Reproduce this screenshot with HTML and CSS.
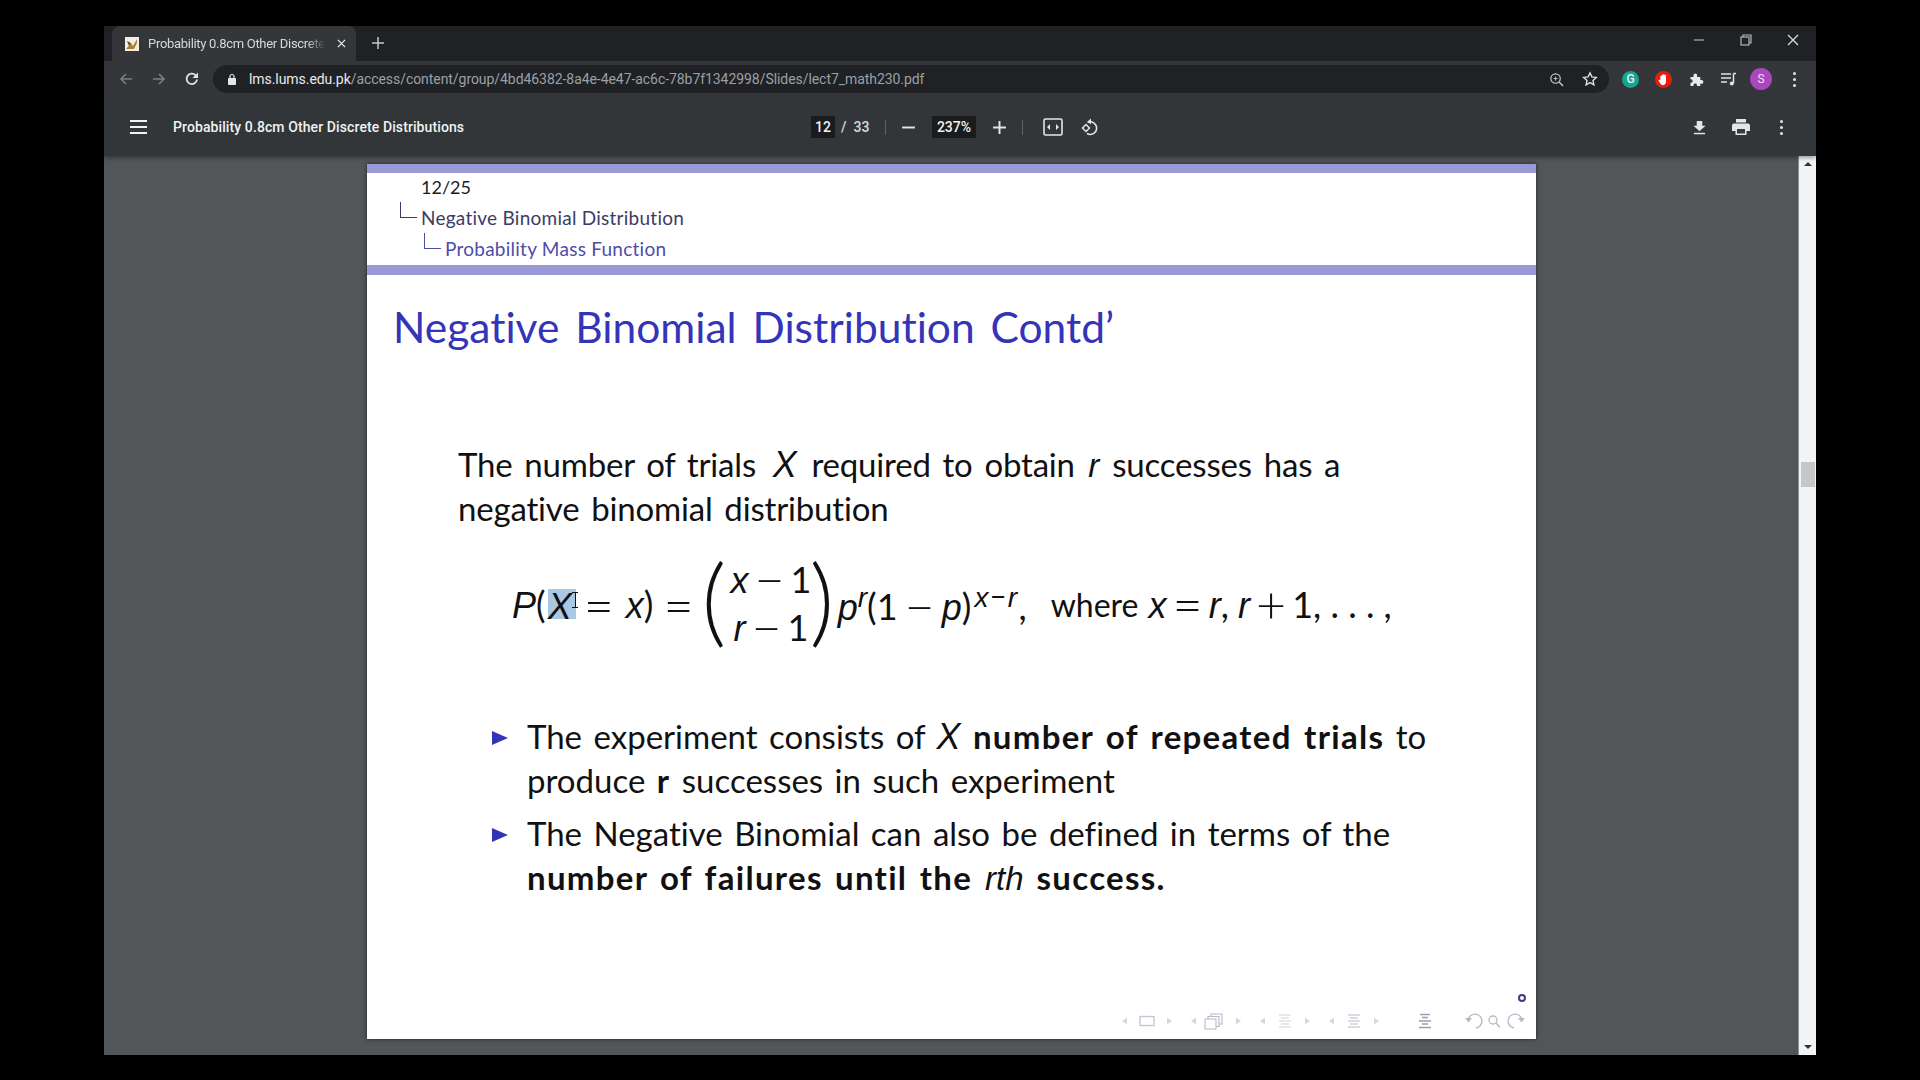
FILE: index.html

```html
<!DOCTYPE html>
<html lang="en">
<head>
  <meta charset="UTF-8">
  <title>Probability 0.8cm Other Discrete Distributions</title>
  <link rel="stylesheet" href="styles.css">
</head>
<body>
  <div class="window">
    <!-- tab strip -->
    <div class="tabstrip">
      <div class="tab">
        <svg class="favicon" viewBox="0 0 14 14"><rect width="14" height="14" fill="#f4efe2"/><path d="M1 12L6 6l2 3 4-7v4l-3 6z" fill="#a8803c"/><path d="M2 4l4 2-2 3z" fill="#5d4a2c"/></svg>
        <span class="tab-title">Probability 0.8cm Other Discrete</span>
        <svg class="tab-close" viewBox="0 0 10 10"><path d="M1 1l8 8M9 1l-8 8" stroke="#e8eaed" stroke-width="1.4"/></svg>
      </div>
      <svg class="new-tab" viewBox="0 0 12 12"><path d="M6 0v12M0 6h12" stroke="#c4c7ca" stroke-width="1.5"/></svg>
      <div class="win-controls">
        <svg viewBox="0 0 12 12"><path d="M1 6h10" stroke="#9a9c9e" stroke-width="1.4"/></svg>
        <svg viewBox="0 0 12 12"><rect x="1" y="3" width="8" height="8" fill="none" stroke="#b5b7b9" stroke-width="1.2"/><path d="M3 3V1h8v8H9" fill="none" stroke="#b5b7b9" stroke-width="1.2"/></svg>
        <svg viewBox="0 0 12 12"><path d="M1 1l10 10M11 1L1 11" stroke="#d8dadc" stroke-width="1.3"/></svg>
      </div>
    </div>
    <!-- address bar -->
    <div class="toolbar">
      <svg class="nav" viewBox="0 0 16 16"><path d="M14 8H3M8 3L3 8l5 5" fill="none" stroke="#7b7e81" stroke-width="1.6"/></svg>
      <svg class="nav" viewBox="0 0 16 16"><path d="M2 8h11M8 3l5 5-5 5" fill="none" stroke="#7b7e81" stroke-width="1.6"/></svg>
      <svg class="nav" viewBox="0 0 16 16"><path d="M13 8.500A5.200 5.200 0 1 1 11.600 4.300" fill="none" stroke="#e3e5e7" stroke-width="1.8"/><path d="M14 1.500V7H8.500z" fill="#e3e5e7"/></svg>
      <div class="omnibox">
        <svg class="lock" viewBox="0 0 10 12"><rect x="1" y="5" width="8" height="7" rx="1" fill="#e3e5e7"/><path d="M3 5V3.500a2 2 0 0 1 4 0V5" fill="none" stroke="#e3e5e7" stroke-width="1.2"/></svg>
        <span class="url"><b>lms.lums.edu.pk</b>/access/content/group/4bd46382-8a4e-4e47-ac6c-78b7f1342998/Slides/lect7_math230.pdf</span>
        <svg class="omni-icon" viewBox="0 0 16 16"><circle cx="7" cy="7" r="5" fill="none" stroke="#c4c7ca" stroke-width="1.300"/><path d="M11 11l4 4" stroke="#c4c7ca" stroke-width="1.500"/><path d="M7 4.800v4.400M4.800 7h4.400" stroke="#c4c7ca"/></svg>
        <svg class="omni-icon star" viewBox="0 0 16 16"><path d="M8 1.800l1.900 4.100 4.400.5-3.300 3 .9 4.400L8 11.600l-3.900 2.200.9-4.400-3.300-3 4.400-.5z" fill="none" stroke="#dcdee0" stroke-width="1.400"/></svg>
      </div>
      <div class="extensions">
        <span class="ext ext-g">G</span>
        <span class="ext ext-hand"><svg viewBox="0 0 16 16"><path d="M4.600 8.500V4.600a.8.8 0 0 1 1.500 0V3.200a.8.8 0 0 1 1.500 0V2.600a.8.8 0 0 1 1.500 0v.8a.8.8 0 0 1 1.500 0v7c0 2-1.200 3.600-3.200 3.600-1.500 0-2.300-.8-3-2L2.800 9.300c-.5-.8.500-1.500 1.100-.9z" fill="#fff"/></svg></span>
        <svg class="ext-svg" viewBox="0 0 16 16"><path d="M1.500 6h3V4.300a1.800 1.800 0 0 1 3.600 0V6h3.200v3h1.200a1.900 1.900 0 0 1 0 3.800h-1.200V15H8v-1a1.800 1.800 0 0 0-3.500 0v1H1.500v-3.200h.8a1.900 1.900 0 0 0 0-3.600h-.8z" fill="#e8eaed"/></svg>
        <svg class="ext-svg ext-queue" viewBox="0 0 16 16"><path d="M0 3h10M0 7h10M0 11h6" stroke="#e0e2e4" stroke-width="1.300"/><path d="M12.500 2.500V12" stroke="#e0e2e4" stroke-width="1.500"/><path d="M12.500 2.500H15" stroke="#e0e2e4" stroke-width="1.500"/><circle cx="10.800" cy="12.500" r="2" fill="#e0e2e4"/></svg>
        <span class="avatar">S</span>
        <span class="dots"><i></i><i></i><i></i></span>
      </div>
    </div>
    <!-- pdf viewer toolbar -->
    <div class="pdfbar">
      <div class="pdf-left">
        <span class="menu"><i></i><i></i><i></i></span>
        <span class="doc-title">Probability 0.8cm Other Discrete Distributions</span>
      </div>
      <div class="pdf-mid">
        <span class="page-box">12</span>
        <span class="page-total">/ &nbsp;33</span>
        <span class="sep"></span>
        <svg class="zoom-btn" viewBox="0 0 14 14"><path d="M1 7h12" stroke="#e3e5e7" stroke-width="1.800"/></svg>
        <span class="zoom-box">237%</span>
        <svg class="zoom-btn" viewBox="0 0 14 14"><path d="M1 7h12M7 1v12" stroke="#e3e5e7" stroke-width="1.800"/></svg>
        <span class="sep"></span>
        <svg class="fit-btn" viewBox="0 0 20 18"><rect x="1" y="1" width="18" height="16" rx="1.500" fill="none" stroke="#e3e5e7" stroke-width="1.600"/><path d="M4 9l3-3v6zM16 9l-3-3v6z" fill="#e3e5e7"/></svg>
        <svg class="rotate-btn" viewBox="0 0 18 18"><path d="M6.500 4.500A6.300 6.300 0 1 1 6 15.500" fill="none" stroke="#e3e5e7" stroke-width="1.500"/><path d="M10 .500v6L6.500 3.500z" fill="#e3e5e7"/><path d="M5 6.500L1.500 10 5 13.500 8.500 10z" fill="none" stroke="#e3e5e7" stroke-width="1.500"/></svg>
      </div>
      <div class="pdf-right">
        <svg viewBox="0 0 14 16"><path d="M4 1h6v5h3.500L7 12 .5 6H4z" fill="#e3e5e7"/><path d="M1 14.500h12" stroke="#e3e5e7" stroke-width="1.600"/></svg>
        <svg viewBox="0 0 18 16"><path d="M4 0h10v3.500H4zM2 4.500h14a2 2 0 0 1 2 2V12h-3.500v4h-11v-4H0V6.500a2 2 0 0 1 2-2z" fill="#e3e5e7"/><rect x="5" y="10" width="8" height="4.500" fill="#3a3c3f"/></svg>
        <span class="dots"><i></i><i></i><i></i></span>
      </div>
    </div>
    <!-- document area -->
    <div class="viewer">
      <div class="page-wrap">
        <div class="slide">
          <div class="slide-head">
            <div class="crumb crumb-num">12/25</div>
            <div class="crumb crumb-one"><span class="elbow"></span>Negative Binomial Distribution</div>
            <div class="crumb crumb-two"><span class="elbow"></span>Probability Mass Function</div>
          </div>
          <h1 class="slide-title">Negative Binomial Distribution Contd’</h1>
          <p class="lead">The number of trials <em class="big">X</em> required to obtain <em>r</em> successes has a negative binomial distribution</p>
          <div class="formula">
            <span class="m"><em>P</em>(</span>
            <span class="sel"><em>X</em></span>
            <span class="op op-first">=</span>
            <span class="m"><em>x</em>)</span>
            <span class="op op-eq">=</span>
            <span class="paren">(</span>
            <span class="binom">
              <span class="binom-row"><em>x</em><span class="op">−</span>1</span>
              <span class="binom-row"><em>r</em><span class="op">−</span>1</span>
            </span>
            <span class="paren">)</span>
            <span class="m m-power"><em>p</em><sup><em>r</em></sup>(1<span class="op">−</span><em>p</em>)<sup class="sup-wide"><em>x</em>−<em>r</em></sup>,</span>
            <span class="m where">where</span>
            <span class="m m-tail"><em>x</em><span class="op">=</span><em>r</em>, <em>r</em><span class="op">+</span>1, . . . ,</span>
            <span class="ibeam"></span>
          </div>
          <ul class="points">
            <li>The experiment consists of <em class="big">X</em> <b>number of repeated trials</b> to produce <b>r</b> successes in such experiment</li>
            <li>The Negative Binomial can also be defined in terms of the <b>number of failures until the</b> <em>rth</em> <b>success.</b></li>
          </ul>
          <div class="slide-foot">
            <span class="foot-dot"></span>
            <div class="beamer-nav">
              <svg class="nav-a" viewBox="0 0 52 14"><path d="M1 7l5-3.500v7zM51 7l-5-3.500v7z" fill="#d8d8e4"/><rect x="19" y="2.500" width="14" height="9" fill="none" stroke="#c4c4d4" stroke-width="1.300"/></svg>
              <svg class="nav-b" viewBox="0 0 52 18"><path d="M1 9l5-3.500v7zM51 9l-5-3.500v7z" fill="#d8d8e4"/><path d="M15 7h11v10H15zM18 7V4.500h11v10h-3M21 4.500V2h11v10h-3" fill="#fff" stroke="#b8b8c8" stroke-width="1.100"/></svg>
              <svg class="nav-a" viewBox="0 0 52 14"><path d="M1 7l5-3.500v7zM51 7l-5-3.500v7z" fill="#d8d8e4"/><path d="M20 1h12M22 4h8M20 7h12M22 10h8M20 13h12" stroke="#d0d0dc" stroke-width="1.200"/></svg>
              <svg class="nav-a" viewBox="0 0 52 14"><path d="M1 7l5-3.500v7zM51 7l-5-3.500v7z" fill="#d8d8e4"/><path d="M20 1h12M22 4h8M20 7h12M22 10h8M20 13h12" stroke="#b8b8c8" stroke-width="1.200"/></svg>
              <svg class="nav-c" viewBox="0 0 14 16"><path d="M2 1.500h10M4 4.500h6M1 8h12M4 11h6M1 14.500h12" stroke="#9c9cb0" stroke-width="1.400"/></svg>
              <svg class="nav-d" viewBox="0 0 60 18"><path d="M3 8a7 7 0 1 1 8 8" fill="none" stroke="#b8b8c8" stroke-width="1.300"/><path d="M0 6h7l-3.500 4.500z" fill="#b8b8c8"/><circle cx="28" cy="8" r="4" fill="none" stroke="#b8b8c8" stroke-width="1.300"/><path d="M31 11l4 4.500" stroke="#b8b8c8" stroke-width="1.400"/><path d="M57 8a7 7 0 1 0-8 8" fill="none" stroke="#b8b8c8" stroke-width="1.300"/><path d="M60 6h-7l3.500 4.500z" fill="#b8b8c8"/></svg>
            </div>
          </div>
        </div>
      </div>
      <div class="scrollbar">
        <span class="arrow-up"></span>
        <span class="thumb"></span>
        <span class="arrow-down"></span>
      </div>
    </div>
  </div>
</body>
</html>
```

FILE: styles.css

```css
body {
  margin: 0;
  background: #000;
  font-family: "Roboto", "Liberation Sans", sans-serif;
  height: 1080px;
  overflow: hidden;
}
.window {
  margin: 26px 0 0 104px;
  width: 1712px;
  height: 1029px;
  display: flex;
  flex-direction: column;
  background: #525659;
}
.tabstrip {
  height: 35px;
  background: #202124;
  display: flex;
  align-items: flex-end;
  flex: none;
}
.tab {
  width: 244px;
  height: 35px;
  margin-left: 8px;
  background: #35363a;
  border-radius: 8px 8px 0 0;
  display: flex;
  align-items: center;
  box-sizing: border-box;
  padding-left: 13px;
}
.favicon {
  width: 14px;
  height: 14px;
}
.tab-title {
  color: #d5d7d9;
  font-size: 13px;
  letter-spacing: -0.3px;
  line-height: 18px;
  margin-left: 9px;
  width: 177px;
  overflow: hidden;
  white-space: nowrap;
  -webkit-mask-image: linear-gradient(to right, #000 90%, transparent);
}
.tab-close {
  width: 9px;
  height: 9px;
  margin-left: 12px;
}
.new-tab {
  width: 12px;
  height: 12px;
  margin: 0 0 12px 16px;
}
.win-controls {
  margin-left: auto;
  display: flex;
  gap: 35px;
  padding: 0 17px 15px 0;
}
.win-controls svg {
  width: 12px;
  height: 12px;
}
.toolbar {
  height: 36px;
  background: #35363a;
  display: flex;
  align-items: center;
  flex: none;
  padding-left: 14px;
}
.nav {
  width: 16px;
  height: 16px;
  margin-right: 17px;
}
.omnibox {
  width: 1396px;
  height: 28px;
  margin-left: -4px;
  background: #202124;
  border-radius: 14px;
  display: flex;
  align-items: center;
  box-sizing: border-box;
  padding-left: 14px;
}
.lock {
  width: 10px;
  height: 12px;
}
.url {
  color: #9aa0a6;
  font-size: 14px;
  letter-spacing: -0.06px;
  margin-left: 12px;
  white-space: nowrap;
  flex: 1;
}
.url b {
  color: #e8eaed;
  font-weight: 400;
}
.omni-icon {
  width: 15px;
  height: 15px;
}
.star {
  margin: 0 11px 0 18px;
  width: 16px;
  height: 16px;
}
.extensions {
  display: flex;
  align-items: center;
  margin-left: 13px;
}
.ext {
  width: 17px;
  height: 17px;
  border-radius: 50%;
  display: flex;
  align-items: center;
  justify-content: center;
  color: #e8f5f2;
  font-size: 12px;
  font-weight: 500;
}
.ext svg {
  width: 15px;
  height: 15px;
}
.ext-g {
  background: #15a68f;
}
.ext-hand {
  background: #ea1c10;
  margin-left: 16px;
}
.ext-svg {
  width: 16px;
  height: 16px;
  margin-left: 17px;
}
.ext-queue {
  margin-left: 16px;
}
.avatar {
  width: 22px;
  height: 22px;
  border-radius: 50%;
  background: #ab47bc;
  color: #f3dcf7;
  font-size: 12px;
  display: flex;
  align-items: center;
  justify-content: center;
  margin-left: 13px;
}
.dots {
  display: flex;
  flex-direction: column;
  gap: 3px;
  margin-left: 21px;
}
.dots i {
  width: 3px;
  height: 3px;
  background: #e3e5e7;
  border-radius: 50%;
}
.pdfbar {
  height: 59px;
  box-sizing: border-box;
  padding-top: 1px;
  background: #323639;
  display: flex;
  align-items: center;
  flex: none;
  position: relative;
  box-shadow: 0 2px 4px rgba(0, 0, 0, 0.35);
  z-index: 1;
}
.pdf-left {
  display: flex;
  align-items: center;
  width: 699px;
  flex: none;
}
.menu {
  display: flex;
  flex-direction: column;
  gap: 4px;
  margin-left: 26px;
}
.menu i {
  width: 17px;
  height: 2px;
  background: #f1f1f1;
}
.doc-title {
  color: #f1f1f1;
  font-size: 14px;
  font-weight: 500;
  letter-spacing: 0.1px;
  margin-left: 26px;
  white-space: nowrap;
}
.pdf-mid {
  display: flex;
  align-items: center;
  color: #f1f1f1;
  font-size: 14px;
  font-weight: 500;
}
.page-box {
  background: #191b1c;
  width: 24px;
  height: 22px;
  line-height: 22px;
  text-align: center;
  margin-left: 8px;
}
.page-total {
  margin-left: 6px;
  color: #d8dadc;
  width: 44px;
}
.sep {
  width: 1px;
  height: 15px;
  background: #5f6265;
}
.zoom-btn {
  width: 15px;
  height: 15px;
  margin: 0 15px;
}
.zoom-box {
  background: #191b1c;
  width: 44px;
  height: 22px;
  line-height: 22px;
  text-align: center;
  margin-left: 1px;
  margin-right: 1px;
}
.fit-btn {
  width: 20px;
  height: 18px;
  margin-left: 20px;
}
.rotate-btn {
  width: 18px;
  height: 18px;
  margin-left: 18px;
}
.pdf-right {
  margin-left: auto;
  display: flex;
  align-items: center;
  padding-right: 33px;
}
.pdf-right svg:first-child {
  width: 13px;
  height: 15px;
}
.pdf-right svg:nth-child(2) {
  width: 18px;
  height: 16px;
  margin-left: 26px;
}
.pdf-right .dots {
  margin-left: 30px;
}
.viewer {
  flex: 1;
  display: flex;
  background: #525659;
  min-height: 0;
}
.page-wrap {
  flex: 1;
  padding: 8px 0 0 263px;
}
.slide {
  width: 1169px;
  height: 875px;
  background: #fff;
  box-shadow: 0 0 4px rgba(0, 0, 0, 0.6);
  display: flex;
  flex-direction: column;
  font-family: "Lato", "Noto Sans", sans-serif;
  font-variant-ligatures: none;
  color: #111;
}
.slide em {
  font-family: "Liberation Sans", sans-serif;
  line-height: 0;
}
.slide-head {
  border-top: 9px solid #9999d8;
  border-bottom: 10px solid #9999d8;
  height: 91px;
  padding-left: 54px;
  padding-top: 1px;
  box-sizing: content-box;
  font-size: 19px;
  display: flex;
  flex-direction: column;
}
.crumb {
  height: 31px;
  line-height: 31px;
  letter-spacing: 0.25px;
  white-space: nowrap;
  position: relative;
}
.crumb-num {
  height: 28px;
  line-height: 26px;
  font-size: 18px;
  color: #1d1d1d;
  letter-spacing: 0;
}
.crumb-one {
  color: #3b3b66;
}
.crumb-two {
  color: #4d4da8;
  padding-left: 24px;
}
.elbow {
  position: absolute;
  left: -21px;
  top: 0;
  width: 16px;
  height: 15px;
  border-left: 1.5px solid #3b3b66;
  border-bottom: 1.5px solid #3b3b66;
}
.crumb-two .elbow {
  left: 3px;
  border-color: #4d4da8;
}
.slide-title {
  margin: 25px 0 0 26px;
  font-size: 42.5px;
  word-spacing: 5px;
  line-height: 54px;
  font-weight: 400;
  color: #3434b8;
  white-space: nowrap;
}
.lead {
  margin: 88px 0 0 91px;
  width: 900px;
  font-size: 33px;
  letter-spacing: -0.18px;
  word-spacing: 3.5px;
  line-height: 44px;
  color: #111;
}
.lead em, .points em {
  margin: 0 1.5px;
}
.slide em.big {
  font-size: 36px;
  margin: 0 3px 0 5px;
}
.points em.big {
  margin: 0 1px 0 0;
}
.formula {
  display: flex;
  align-items: center;
  height: 90px;
  margin: 29px 0 0 145px;
  font-size: 36px;
  white-space: nowrap;
  position: relative;
}
.formula em {
  line-height: 36px;
}
.sel {
  background: #a8c8e4;
  width: 28px;
  height: 30px;
  line-height: 30px;
  margin-left: 2px;
}
.op {
  font-size: 52px;
  font-weight: 300;
  line-height: 0;
  vertical-align: -5px;
  margin: 0 11px;
}
.op-first {
  margin: 0 12px 0 8px;
}
.op-eq {
  margin: 0 8px 0 10px;
}
.paren {
  font-size: 96px;
  font-weight: 300;
  line-height: 90px;
  margin-top: -12px;
}
.binom {
  display: flex;
  flex-direction: column;
  align-items: center;
  line-height: 48px;
  margin: -2px -2px 0 4px;
}
.binom-row {
  height: 48px;
}
.binom-row .op {
  margin: 0 6px;
}
.m sup {
  font-size: 28px;
  line-height: 0;
}
.m .sup-wide {
  margin-left: 3px;
  letter-spacing: 1.5px;
}
.m-power {
  margin-left: 3.5px;
}
.m-power .op {
  margin: 0 7px;
}
.where {
  margin-left: 24px;
  font-size: 32px;
}
.m-tail {
  margin-left: 10px;
}
.m-tail .op {
  margin: 0 6px;
}
.ibeam {
  position: absolute;
  left: 60px;
  top: 33px;
  width: 6px;
  height: 16px;
  box-sizing: border-box;
  border-top: 1px solid #111;
  border-bottom: 1px solid #111;
  background: linear-gradient(#111, #111) center / 1px 100% no-repeat;
}
.points {
  list-style: none;
  margin: 65px 0 0 160px;
  padding: 0;
  width: 915px;
  font-size: 33px;
  word-spacing: 3px;
  line-height: 44px;
}
.points b {
  letter-spacing: 1.3px;
}
.points li {
  position: relative;
  margin-bottom: 9px;
}
.points li::before {
  content: "";
  position: absolute;
  left: -35px;
  top: 17px;
  border-left: 16px solid #3434b8;
  border-top: 7px solid transparent;
  border-bottom: 7px solid transparent;
}
.slide-foot {
  margin-top: auto;
  padding: 0 11px 9px 0;
  display: flex;
  flex-direction: column;
  align-items: flex-end;
}
.foot-dot {
  width: 8px;
  height: 8px;
  border: 2px solid #3b3b80;
  border-radius: 50%;
  box-sizing: border-box;
  margin: 0 -1px 10px 0;
}
.beamer-nav {
  display: flex;
  align-items: center;
}
.nav-a {
  width: 52px;
  height: 14px;
  margin-right: 17px;
}
.nav-b {
  width: 52px;
  height: 18px;
  margin-right: 17px;
}
.nav-c {
  width: 14px;
  height: 16px;
  margin: 0 33px 0 21px;
}
.nav-d {
  width: 60px;
  height: 18px;
}
.scrollbar {
  width: 18px;
  background: #f1f3f4;
  flex: none;
  display: flex;
  flex-direction: column;
  align-items: center;
  position: relative;
  border-left: 1px solid #8a8d8f;
  box-sizing: border-box;
}
.arrow-up {
  border: 4px solid transparent;
  border-top: 0;
  border-bottom: 4px solid #333;
  margin-top: 6px;
}
.thumb {
  width: 14px;
  height: 25px;
  background: #c4c6c8;
  margin-top: 296px;
}
.arrow-down {
  border: 4px solid transparent;
  border-bottom: 0;
  border-top: 4px solid #333;
  margin-top: auto;
  margin-bottom: 6px;
}
```
